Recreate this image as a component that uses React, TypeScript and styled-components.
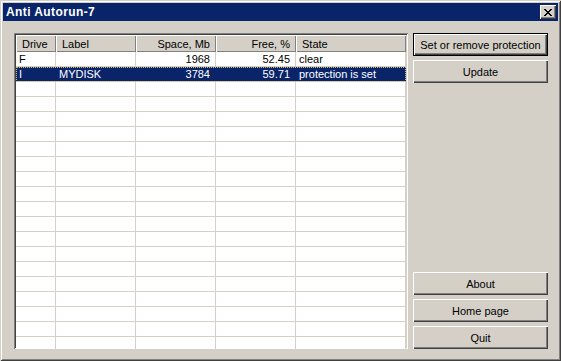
import styled, { createGlobalStyle } from 'styled-components';

const GlobalStyle = createGlobalStyle`
  html, body {
    margin: 0;
    padding: 0;
    background: #d4d0c8;
  }
  body {
    font-family: "Liberation Sans", Arial, sans-serif;
    font-size: 11px;
    color: #000;
  }
`;

const Window = styled.div`
  width: 561px;
  height: 361px;
  box-sizing: border-box;
  padding: 3px;
  background: #d4d0c8;
  box-shadow: inset 1px 1px #d4d0c8, inset -1px -1px #404040, inset 2px 2px #ffffff, inset -2px -2px #808080;
  display: flex;
  flex-direction: column;
`;

const TitleBar = styled.div`
  height: 18px;
  background: #0a246a;
  display: flex;
  align-items: center;
  justify-content: space-between;
  padding: 0 2px 0 3px;
`;

const Title = styled.span`
  color: #fff;
  font-weight: bold;
  font-size: 12px;
  letter-spacing: 0.4px;
`;

const CloseButton = styled.div`
  width: 16px;
  height: 14px;
  box-sizing: border-box;
  background: #d4d0c8;
  box-shadow: inset 1px 1px #ffffff, inset -1px -1px #404040, inset -2px -2px #808080;
  display: flex;
  align-items: center;
  justify-content: center;
  padding-right: 1px;
`;

const Body = styled.div`
  flex: 1;
  display: flex;
  gap: 5px;
  padding: 12px 10px 9px 11px;
`;

const ListView = styled.div`
  width: 394px;
  height: 316px;
  box-sizing: border-box;
  padding: 2px;
  background: #fff;
  box-shadow: inset 1px 1px #808080, inset -1px -1px #ffffff, inset 2px 2px #404040, inset -2px -2px #d4d0c8;
  overflow: hidden;
`;

const cols = '40px 80px 80px 80px 1fr';

const HeaderRow = styled.div`
  display: grid;
  grid-template-columns: ${cols};
  height: 17px;
`;

const HeaderCell = styled.div<{ $right?: boolean }>`
  background: #d4d0c8;
  box-shadow: inset 1px 1px #ffffff, inset -1px -1px #808080;
  display: flex;
  align-items: center;
  justify-content: ${(p) => (p.$right ? 'flex-end' : 'flex-start')};
  padding: 0 6px;
  white-space: nowrap;
`;

const Row = styled.div<{ $selected?: boolean }>`
  display: grid;
  grid-template-columns: ${cols};
  height: 14px;
  border-bottom: 1px solid #d4d0c8;
  background: ${(p) => (p.$selected ? '#0a246a' : '#fff')};
  color: ${(p) => (p.$selected ? '#fff' : '#000')};
  outline: ${(p) => (p.$selected ? '1px dotted #d8c070' : 'none')};
  outline-offset: -1px;
`;

const Cell = styled.div<{ $right?: boolean; $selected?: boolean }>`
  display: flex;
  align-items: center;
  justify-content: ${(p) => (p.$right ? 'flex-end' : 'flex-start')};
  padding: 0 5px 0 3px;
  border-right: 1px solid ${(p) => (p.$selected ? '#0a246a' : '#d4d0c8')};
  white-space: nowrap;
  overflow: hidden;
`;

const Side = styled.div`
  width: 135px;
  display: flex;
  flex-direction: column;
  gap: 4px;
`;

const Spacer = styled.div`
  flex: 1;
  margin-bottom: -1px;
`;

const Button = styled.button<{ $default?: boolean }>`
  height: 23px;
  width: 100%;
  font-family: inherit;
  font-size: 11px;
  color: #000;
  background: #d4d0c8;
  border: ${(p) => (p.$default ? '1px solid #000' : 'none')};
  box-shadow: inset 1px 1px #ffffff, inset -1px -1px #404040, inset -2px -2px #808080;
  padding: 0;
  cursor: default;
`;

const drives = [
  { drive: 'F', label: '', space: '1968', free: '52.45', state: 'clear' },
  { drive: 'I', label: 'MYDISK', space: '3784', free: '59.71', state: 'protection is set', selected: true },
];

const emptyRows = Array.from({ length: 21 });

export const App = (): JSX.Element => {
  return (
    <>
      <GlobalStyle />
      <Window>
        <TitleBar>
          <Title>Anti Autorun-7</Title>
          <CloseButton>
            <svg width="8" height="7" viewBox="0 0 8 7" shapeRendering="crispEdges">
              <path
                d="M0 0h2v1h-2zM6 0h2v1h-2zM1 1h2v1h-2zM5 1h2v1h-2zM2 2h4v1h-4zM3 3h2v1h-2zM2 4h4v1h-4zM1 5h2v1h-2zM5 5h2v1h-2zM0 6h2v1h-2zM6 6h2v1h-2z"
                fill="#000"
              />
            </svg>
          </CloseButton>
        </TitleBar>
        <Body>
          <ListView>
            <HeaderRow>
              <HeaderCell>Drive</HeaderCell>
              <HeaderCell>Label</HeaderCell>
              <HeaderCell $right>Space, Mb</HeaderCell>
              <HeaderCell $right>Free, %</HeaderCell>
              <HeaderCell>State</HeaderCell>
            </HeaderRow>
            {drives.map((d) => (
              <Row key={d.drive} $selected={d.selected}>
                <Cell $selected={d.selected}>{d.drive}</Cell>
                <Cell $selected={d.selected}>{d.label}</Cell>
                <Cell $right $selected={d.selected}>{d.space}</Cell>
                <Cell $right $selected={d.selected}>{d.free}</Cell>
                <Cell $selected={d.selected}>{d.state}</Cell>
              </Row>
            ))}
            {emptyRows.map((_, i) => (
              <Row key={i}>
                <Cell />
                <Cell />
                <Cell />
                <Cell />
                <Cell />
              </Row>
            ))}
          </ListView>
          <Side>
            <Button $default>Set or remove protection</Button>
            <Button>Update</Button>
            <Spacer />
            <Button>About</Button>
            <Button>Home page</Button>
            <Button>Quit</Button>
          </Side>
        </Body>
      </Window>
    </>
  );
};

export default App;
